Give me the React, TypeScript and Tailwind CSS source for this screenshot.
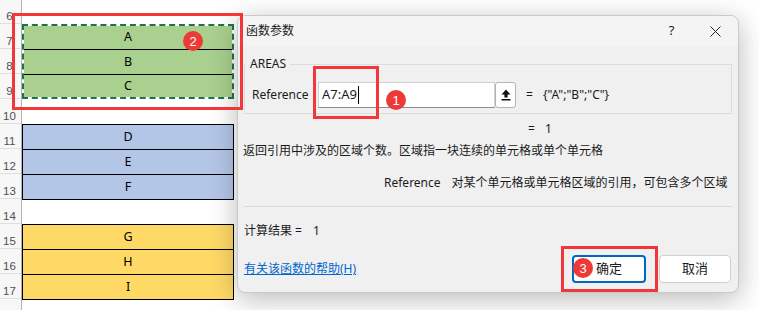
import React from "react";

const ui = "font-['Noto_Sans','Noto_Sans_CJK_SC',sans-serif]";

// row numbers shown in the header column, first one is partly cut off
const rowNums = [
  { n: 6, h: "h-[24px]" },
  { n: 7, h: "h-[25px]" },
  { n: 8, h: "h-[25px]" },
  { n: 9, h: "h-[25px]" },
  { n: 10, h: "h-[25px]" },
  { n: 11, h: "h-[25px]" },
  { n: 12, h: "h-[25px]" },
  { n: 13, h: "h-[25px]" },
  { n: 14, h: "h-[25px]" },
  { n: 15, h: "h-[25px]" },
  { n: 16, h: "h-[25px]" },
  { n: 17, h: "h-[25px]" },
  { n: 18, h: "h-[25px]" },
];

function Badge({ n, className }: { n: number; className: string }) {
  return (
    <div
      className={`absolute w-[20px] h-[20px] rounded-full bg-[#ee3a36] text-white flex items-center justify-center text-[13px] leading-none font-['Liberation_Sans',sans-serif] ${className}`}
    >
      {n}
    </div>
  );
}

function Block({ letters, color }: { letters: string[]; color: string }) {
  return (
    <div className={`h-[76px] shrink-0 border border-black flex flex-col ${color}`}>
      {letters.map((l, i) => (
        <div
          key={l}
          className={`flex-1 flex items-center justify-center text-[12.5px] text-black ${i > 0 ? "border-t border-black" : ""}`}
        >
          {l}
        </div>
      ))}
    </div>
  );
}

function Sheet() {
  return (
    <div className="flex w-full h-full bg-white">
      {/* Row header */}
      <div className="w-[22px] shrink-0 bg-[#f7f7f7] border-r border-[#b4b4b4] flex flex-col">
        {rowNums.map((r) => (
          <div
            key={r.n}
            className={`${r.h} shrink-0 border-b border-[#dedede] flex items-end justify-center pr-[2px] text-[11.5px] leading-[14px] text-[#505050] font-['Liberation_Sans',sans-serif]`}
          >
            {r.n}
          </div>
        ))}
      </div>

      {/* Cells, column A */}
      <div className="w-[212px] shrink-0 flex flex-col font-['Noto_Sans',sans-serif]">
        <div className="h-[24px] shrink-0" />
        <div className="h-[75px] shrink-0 bg-white border-2 border-dashed border-[#217346] flex flex-col">
          <div className="h-[23px] bg-[#a9d08e] flex items-center justify-center text-[12.5px]">A</div>
          <div className="h-[25px] bg-[#a9d08e] border-t border-black flex items-center justify-center text-[12.5px]">B</div>
          <div className="h-[23px] bg-[#a9d08e] border-t border-black flex items-center justify-center text-[12.5px]">C</div>
        </div>
        <div className="h-[25px] shrink-0" />
        <Block letters={["D", "E", "F"]} color="bg-[#b4c6e7]" />
        <div className="h-[24px] shrink-0" />
        <Block letters={["G", "H", "I"]} color="bg-[#ffd966]" />
      </div>
    </div>
  );
}

function UploadIcon() {
  return (
    <svg width="10" height="12" viewBox="0 0 10 12">
      <path d="M5 0.5 L9.5 5.5 H6.6 V8.6 H3.4 V5.5 H0.5 Z" fill="#111" />
      <rect x="0.5" y="10" width="9" height="1.5" fill="#111" />
    </svg>
  );
}

function Dialog() {
  return (
    <div
      className={`absolute left-[237px] top-[15px] w-[502px] h-[278px] rounded-[8px] border border-[#c9c9c9] bg-[#f0f0f0] shadow-[0_6px_28px_rgba(0,0,0,0.28)] overflow-hidden flex flex-col text-[#1a1a1a] text-[12px] ${ui}`}
    >
      {/* Title bar */}
      <div className="h-[30px] shrink-0 bg-[#f4f4f4] flex items-center justify-between">
        <span className="pl-[8px] text-[12px] leading-4">函数参数</span>
        <div className="flex h-full">
          <div className="w-[46px] flex items-center justify-center pl-[5px] text-[13px]">?</div>
          <div className="w-[46px] flex items-center justify-center">
            <svg width="11" height="11" viewBox="0 0 11 11">
              <path d="M0.5 0.5 L10.5 10.5 M10.5 0.5 L0.5 10.5" stroke="#222" strokeWidth="1" />
            </svg>
          </div>
        </div>
      </div>

      {/* AREAS group */}
      <div className="mt-[18px] mx-[6px] h-[50px] shrink-0 border border-[#dcdcdc]">
        <span className="block w-fit -mt-[9px] ml-[1px] px-1 bg-[#f0f0f0] leading-4">AREAS</span>
        <div className="mt-[10px] flex items-center h-[26px]">
          <span className="w-[73px] pl-[7px] shrink-0">Reference</span>
          <div className="w-[177px] h-[26px] bg-white border border-[#cfcfcf] border-b-[#8c8c8c] flex items-center pl-[3px] text-[13px]">
            A7:A9
            <span className="ml-[1px] w-px h-[18px] bg-black" />
          </div>
          <div className="w-[21px] h-[26px] bg-white border border-[#b5b5b5] rounded-[3px] flex items-center justify-center">
            <UploadIcon />
          </div>
          <span className="ml-[10px]">=</span>
          <span className="ml-[10px]">{'{"A";"B";"C"}'}</span>
        </div>
      </div>

      <div className="mt-[7px] pl-[290px] leading-4 flex gap-[10px]">
        <span>=</span>
        <span>1</span>
      </div>

      <p className="mt-[6px] pl-[5px] leading-4">返回引用中涉及的区域个数。区域指一块连续的单元格或单个单元格</p>

      <div className="mt-[16px] pl-[146px] leading-4 flex gap-[11px]">
        <span>Reference</span>
        <span>对某个单元格或单元格区域的引用，可包含多个区域</span>
      </div>

      <div className="mt-[15px] mx-[6px] h-px shrink-0 bg-[#d8d8d8]" />

      <div className="mt-[16px] pl-[6px] leading-4 flex gap-[11px]">
        <span>计算结果 =</span>
        <span>1</span>
      </div>

      <div className="mt-[16px] flex items-center justify-between">
        <a className="pl-[6px] text-[#0066cc] underline leading-4">有关该函数的帮助(H)</a>
        <div className="flex gap-[13px] pr-[7px]">
          <div className="w-[74px] h-[28px] rounded-[4px] bg-white border-2 border-[#0067c0] flex items-center justify-center text-[13px]">
            确定
          </div>
          <div className="w-[72px] h-[28px] rounded-[4px] bg-white border border-[#d0d0d0] flex items-center justify-center text-[13px]">
            取消
          </div>
        </div>
      </div>
    </div>
  );
}

export default function App() {
  return (
    <div className="relative w-[759px] h-[310px] overflow-hidden bg-white">
      <Sheet />
      <Dialog />

      {/* annotations */}
      <div className="absolute left-[12px] top-[13px] w-[231px] h-[97px] border-[3px] border-[#f2373a]" />
      <div className="absolute left-[313px] top-[66px] w-[66px] h-[53px] border-[3px] border-[#f2373a]" />
      <div className="absolute left-[561px] top-[246px] w-[97px] h-[46px] border-[3px] border-[#f2373a]" />
      <Badge n={2} className="left-[183px] top-[31px]" />
      <Badge n={1} className="left-[386px] top-[90px]" />
      <Badge n={3} className="left-[573px] top-[258px]" />
    </div>
  );
}
